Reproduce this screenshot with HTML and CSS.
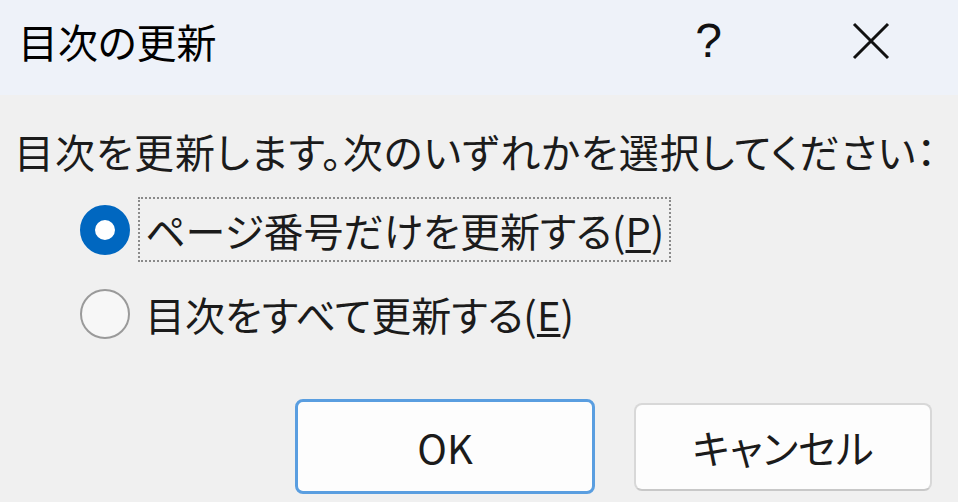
FILE: index.html
```html
<!DOCTYPE html>
<html lang="ja">
<head>
    <meta charset="UTF-8">
    <meta name="viewport" content="width=device-width, initial-scale=1.0">
    <title>目次の更新</title>
    <link rel="stylesheet" href="styles.css">
</head>
<body>

    <div class="dialog">
        <div class="titlebar">
            <span class="title">目次の更新</span>
            <div class="caption-btns">
                <span class="help">?</span>
                <svg class="close" width="38" height="38" viewBox="0 0 38 38">
                    <path d="M2 2 L36 36 M36 2 L2 36" stroke="#111" stroke-width="3" fill="none"/>
                </svg>
            </div>
        </div>

        <div class="content">
            <p class="prompt">目次を更新します。次のいずれかを選択してください：</p>

            <div class="options">
                <label class="option">
                    <span class="radio checked"></span>
                    <span class="option-text focused">ページ番号だけを更新する(<u>P</u>)</span>
                </label>
                <label class="option">
                    <span class="radio"></span>
                    <span class="option-text">目次をすべて更新する(<u>E</u>)</span>
                </label>
            </div>

            <div class="buttons">
                <button class="btn default">OK</button>
                <button class="btn">キャンセル</button>
            </div>
        </div>
    </div>

</body>
</html>
```

FILE: styles.css
```css
body {
    margin: 0;
    padding: 0;
    font-family: "Noto Sans CJK JP", "Noto Sans", sans-serif;
    font-feature-settings: "palt";
    color: #1b1b1b;
    background-color: #f0f0f0;
}

.dialog {
    width: 958px;
    height: 502px;
    overflow: hidden;
}

.titlebar {
    height: 95px;
    box-sizing: border-box;
    display: flex;
    align-items: flex-start;
    padding: 21px 68px 0 18px;
    background-color: #eef2f9;
}

.title {
    font-size: 40px;
    line-height: 40px;
    color: #000;
}

.caption-btns {
    margin-left: auto;
    display: flex;
    align-items: center;
    gap: 130px;
    height: 40px;
}

.help {
    font-family: "Liberation Sans", sans-serif;
    font-size: 48px;
    line-height: 40px;
    color: #111;
}

.content {
    padding: 36px 26px 0 14px;
}

.prompt {
    margin: 0;
    font-size: 40px;
    line-height: 40px;
    letter-spacing: 1px;
    white-space: nowrap;
}

.options {
    margin-top: 26px;
    padding-left: 66px;
}

.option {
    display: flex;
    align-items: center;
    gap: 8px;
    height: 65px;
}

.option + .option {
    margin-top: 19px;
}

.radio {
    width: 50px;
    height: 50px;
    box-sizing: border-box;
    border-radius: 50%;
    border: 2px solid #9a9a9a;
    background-color: #f7f7f7;
}

.radio.checked {
    border: 15px solid #0067c0;
    background-color: #fff;
}

.option-text {
    height: 65px;
    box-sizing: border-box;
    display: flex;
    align-items: center;
    padding: 0 5px;
    border: 2px dotted transparent;
    font-size: 40px;
    line-height: 40px;
    white-space: nowrap;
}

.option-text.focused {
    border-color: #8a8a8a;
}

.option-text u {
    text-decoration-thickness: 3px;
    text-underline-offset: 3px;
}

.buttons {
    display: flex;
    justify-content: flex-end;
    align-items: center;
    gap: 39px;
    margin-top: 53px;
}

.btn {
    width: 298px;
    height: 88px;
    border: 2px solid #d8d8d8;
    border-bottom-color: #c8c8c8;
    border-radius: 8px;
    background-color: #fdfdfd;
    font-family: "Noto Sans CJK JP", "Noto Sans", sans-serif;
    font-feature-settings: "palt";
    font-size: 40px;
    color: #1b1b1b;
    padding: 0;
}

.btn.default {
    width: 300px;
    height: 95px;
    border: 3px solid #5a9ee0;
}
```
